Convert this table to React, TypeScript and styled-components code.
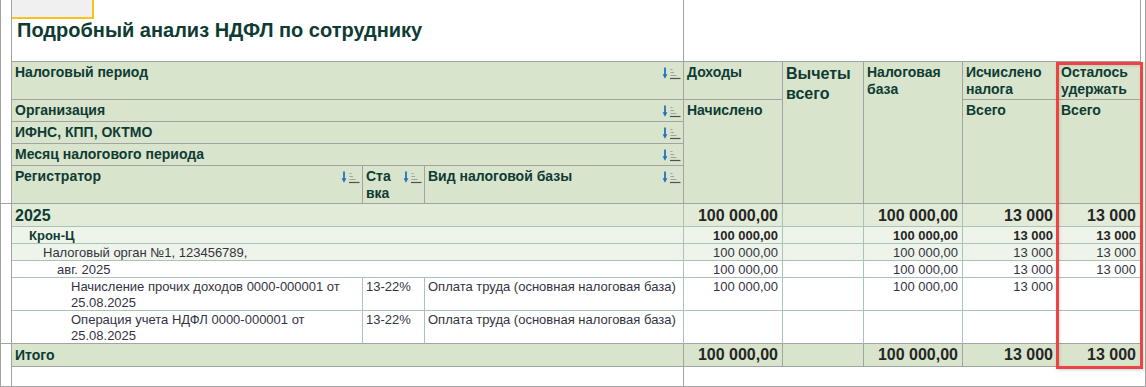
import React from 'react';
import styled, { createGlobalStyle, css } from 'styled-components';

const C = {
  headerBg: '#d9e4cc',
  yearBg: '#e2ebd8',
  lightBg: '#eef4e9',
  white: '#ffffff',
  gridLine: '#a3a3a3',
  dataLine: '#a9c3b9',
  ink: '#0e3b33',
  text: '#33333f',
  num: '#262626',
  red: '#ec4343',
};

type Kind = 'year' | 'org' | 'ifns' | 'month' | 'detail' | 'total';

interface KindStyle {
  bg: string;
  line: string;
  labelSize: number;
  labelWeight: number;
  labelColor: string;
  numSize: number;
  numWeight: number;
  numColor: string;
  lh: number;
  pt: number;
}

const KIND: Record<Kind, KindStyle> = {
  year: { bg: C.yearBg, line: C.dataLine, labelSize: 16, labelWeight: 700, labelColor: C.ink, numSize: 16, numWeight: 700, numColor: C.num, lh: 18, pt: 3 },
  org: { bg: C.lightBg, line: C.dataLine, labelSize: 13, labelWeight: 700, labelColor: C.ink, numSize: 13, numWeight: 700, numColor: C.num, lh: 16, pt: 1 },
  ifns: { bg: C.lightBg, line: C.dataLine, labelSize: 13, labelWeight: 400, labelColor: C.text, numSize: 13, numWeight: 400, numColor: C.text, lh: 16, pt: 1 },
  month: { bg: C.white, line: C.dataLine, labelSize: 13, labelWeight: 400, labelColor: C.text, numSize: 13, numWeight: 400, numColor: C.text, lh: 16, pt: 1 },
  detail: { bg: C.white, line: C.dataLine, labelSize: 13, labelWeight: 400, labelColor: C.text, numSize: 13, numWeight: 400, numColor: C.text, lh: 16, pt: 1 },
  total: { bg: C.headerBg, line: C.gridLine, labelSize: 14, labelWeight: 700, labelColor: C.ink, numSize: 16, numWeight: 700, numColor: C.num, lh: 18, pt: 2 },
};

interface DataRow {
  kind: Kind;
  level: number;
  label: string;
  detail?: { stavka: string; vid: string };
  values: [string, string, string, string, string];
}

const FULL: [string, string, string, string, string] = ['100 000,00', '', '100 000,00', '13 000', '13 000'];

const ROWS: DataRow[] = [
  { kind: 'year', level: 0, label: '2025', values: FULL },
  { kind: 'org', level: 1, label: 'Крон-Ц', values: FULL },
  { kind: 'ifns', level: 2, label: 'Налоговый орган №1, 123456789,', values: FULL },
  { kind: 'month', level: 3, label: 'авг. 2025', values: FULL },
  {
    kind: 'detail',
    level: 4,
    label: 'Начисление прочих доходов 0000-000001 от 25.08.2025',
    detail: { stavka: '13-22%', vid: 'Оплата труда (основная налоговая база)' },
    values: ['100 000,00', '', '100 000,00', '13 000', ''],
  },
  {
    kind: 'detail',
    level: 4,
    label: 'Операция учета НДФЛ 0000-000001 от 25.08.2025',
    detail: { stavka: '13-22%', vid: 'Оплата труда (основная налоговая база)' },
    values: ['', '', '', '', ''],
  },
  { kind: 'total', level: 0, label: 'Итого', values: FULL },
];

const GlobalStyle = createGlobalStyle`
  *, *::before, *::after { box-sizing: border-box; }
  html, body { margin: 0; padding: 0; background: #fff; }
  body { font-family: "Liberation Sans", Arial, sans-serif; }
`;

const Frame = styled.div`
  position: relative;
  width: 1146px;
  height: 387px;
  border-left: 1px solid ${C.gridLine};
  border-right: 1px solid ${C.gridLine};
  border-bottom: 1px solid ${C.gridLine};
  background: #fff;
  overflow: hidden;
`;

const Sheet = styled.div`
  display: grid;
  grid-template-columns: 11px 351px 62px 259px 99px 81px 99px 95px 83px;
  grid-template-rows: 62px 38px 22px 22px 22px 38px 23px 17px 17px 17px 33px 33px 23px 19px;
  color: ${C.ink};
`;

const GutterCell = styled.div<{ $row: string; $bottom?: boolean }>`
  grid-column: 1;
  grid-row: ${(p) => p.$row};
  background: #fff;
  border-right: 1px solid ${C.gridLine};
  border-bottom: ${(p) => (p.$bottom ? `1px solid ${C.gridLine}` : 'none')};
`;

const TitleCell = styled.div`
  grid-column: 2 / 5;
  grid-row: 1;
  display: flex;
  flex-direction: column;
  align-items: flex-start;
  border-right: 1px solid ${C.gridLine};
  border-bottom: 1px solid ${C.gridLine};
`;

const SelectedMark = styled.div`
  box-sizing: content-box;
  width: 80px;
  height: 17px;
  background: #f0f0f0;
  border-right: 2px solid #f7c21c;
  border-bottom: 2px solid #f7c21c;
`;

const Title = styled.h1`
  margin: 0;
  padding-left: 5px;
  font-size: 20px;
  line-height: 23px;
  font-weight: 700;
  color: ${C.ink};
  white-space: nowrap;
`;

const TopBlank = styled.div`
  grid-column: 5 / 10;
  grid-row: 1;
  border-right: 1px solid ${C.gridLine};
  border-bottom: 1px solid ${C.gridLine};
`;

const HeaderCell = styled.div<{ $col: string; $row: string; $big?: boolean }>`
  grid-column: ${(p) => p.$col};
  grid-row: ${(p) => p.$row};
  display: flex;
  justify-content: space-between;
  align-items: flex-start;
  gap: 2px;
  padding: 2px 1px 0 3px;
  background: ${C.headerBg};
  border-right: 1px solid ${C.gridLine};
  border-bottom: 1px solid ${C.gridLine};
  font-weight: 700;
  font-size: ${(p) => (p.$big ? 16 : 14)}px;
  line-height: ${(p) => (p.$big ? 20 : 17)}px;
  color: ${C.ink};
  overflow: hidden;
`;

const HeaderLabel = styled.span`
  min-width: 0;
`;

const SortSvg = styled.svg`
  flex: none;
  margin-top: 3px;
`;

const SortIcon = () => (
  <SortSvg width="20" height="13" viewBox="0 0 20 13">
    <path d="M3 0.5V8" stroke="#2372c2" strokeWidth="1.8" />
    <path d="M0.6 7.2H5.4L3 11.8Z" fill="#2372c2" />
    <path d="M8.5 2.5H10.5M8.5 5.5H12M8.5 8.5H14.5" stroke="#a2a2a2" strokeWidth="1" />
    <path d="M8 11.5H18.5" stroke="#505050" strokeWidth="1.2" />
  </SortSvg>
);

const dataBase = css<{ $kind: Kind; $closing?: boolean }>`
  background: ${(p) => KIND[p.$kind].bg};
  border-right: 1px solid ${(p) => KIND[p.$kind].line};
  border-bottom: 1px solid ${(p) => (p.$closing ? C.gridLine : KIND[p.$kind].line)};
  padding-top: ${(p) => KIND[p.$kind].pt}px;
  line-height: ${(p) => KIND[p.$kind].lh}px;
  overflow: hidden;
`;

const LabelCell = styled.div<{ $kind: Kind; $closing?: boolean; $col: string; $row: number; $level: number }>`
  ${dataBase}
  grid-column: ${(p) => p.$col};
  grid-row: ${(p) => p.$row};
  padding-left: ${(p) => 3 + p.$level * 14}px;
  padding-right: 2px;
  font-size: ${(p) => KIND[p.$kind].labelSize}px;
  font-weight: ${(p) => KIND[p.$kind].labelWeight};
  color: ${(p) => KIND[p.$kind].labelColor};
`;

const NumberCell = styled.div<{ $kind: Kind; $closing?: boolean; $col: number; $row: number }>`
  ${dataBase}
  grid-column: ${(p) => p.$col};
  grid-row: ${(p) => p.$row};
  padding-right: 4px;
  text-align: right;
  white-space: nowrap;
  font-size: ${(p) => KIND[p.$kind].numSize}px;
  font-weight: ${(p) => KIND[p.$kind].numWeight};
  color: ${(p) => KIND[p.$kind].numColor};
`;

const BottomBlank = styled.div<{ $col: string; $edge?: boolean }>`
  grid-column: ${(p) => p.$col};
  grid-row: 14;
  background: #fff;
  border-right: ${(p) => (p.$edge ? `1px solid ${C.gridLine}` : 'none')};
`;

const Highlight = styled.div`
  position: absolute;
  left: 1055px;
  top: 62px;
  width: 87px;
  height: 307px;
  border: 3px solid ${C.red};
  box-shadow: 1px 1px 3px rgba(0, 0, 0, 0.18), inset 1px 1px 3px rgba(0, 0, 0, 0.12);
  pointer-events: none;
`;

const Header = () => (
  <>
    <HeaderCell $col="2 / 5" $row="2">
      <HeaderLabel>Налоговый период</HeaderLabel>
      <SortIcon />
    </HeaderCell>
    <HeaderCell $col="2 / 5" $row="3">
      <HeaderLabel>Организация</HeaderLabel>
      <SortIcon />
    </HeaderCell>
    <HeaderCell $col="2 / 5" $row="4">
      <HeaderLabel>ИФНС, КПП, ОКТМО</HeaderLabel>
      <SortIcon />
    </HeaderCell>
    <HeaderCell $col="2 / 5" $row="5">
      <HeaderLabel>Месяц налогового периода</HeaderLabel>
      <SortIcon />
    </HeaderCell>
    <HeaderCell $col="2" $row="6">
      <HeaderLabel>Регистратор</HeaderLabel>
      <SortIcon />
    </HeaderCell>
    <HeaderCell $col="3" $row="6">
      <HeaderLabel>
        Ста
        <br />
        вка
      </HeaderLabel>
      <SortIcon />
    </HeaderCell>
    <HeaderCell $col="4" $row="6">
      <HeaderLabel>Вид налоговой базы</HeaderLabel>
      <SortIcon />
    </HeaderCell>
    <HeaderCell $col="5" $row="2">
      <HeaderLabel>Доходы</HeaderLabel>
    </HeaderCell>
    <HeaderCell $col="5" $row="3 / 7">
      <HeaderLabel>Начислено</HeaderLabel>
    </HeaderCell>
    <HeaderCell $col="6" $row="2 / 7" $big>
      <HeaderLabel>Вычеты всего</HeaderLabel>
    </HeaderCell>
    <HeaderCell $col="7" $row="2 / 7">
      <HeaderLabel>Налоговая база</HeaderLabel>
    </HeaderCell>
    <HeaderCell $col="8" $row="2">
      <HeaderLabel>Исчислено налога</HeaderLabel>
    </HeaderCell>
    <HeaderCell $col="8" $row="3 / 7">
      <HeaderLabel>Всего</HeaderLabel>
    </HeaderCell>
    <HeaderCell $col="9" $row="2">
      <HeaderLabel>Осталось удержать</HeaderLabel>
    </HeaderCell>
    <HeaderCell $col="9" $row="3 / 7">
      <HeaderLabel>Всего</HeaderLabel>
    </HeaderCell>
  </>
);

const Row = ({ row, index, closing }: { row: DataRow; index: number; closing: boolean }) => {
  const r = 7 + index;
  return (
    <>
      {row.detail ? (
        <>
          <LabelCell $kind={row.kind} $closing={closing} $col="2" $row={r} $level={row.level}>
            {row.label}
          </LabelCell>
          <LabelCell $kind={row.kind} $closing={closing} $col="3" $row={r} $level={0}>
            {row.detail.stavka}
          </LabelCell>
          <LabelCell $kind={row.kind} $closing={closing} $col="4" $row={r} $level={0}>
            {row.detail.vid}
          </LabelCell>
        </>
      ) : (
        <LabelCell $kind={row.kind} $closing={closing} $col="2 / 5" $row={r} $level={row.level}>
          {row.label}
        </LabelCell>
      )}
      {row.values.map((v, i) => (
        <NumberCell key={i} $kind={row.kind} $closing={closing} $col={5 + i} $row={r}>
          {v}
        </NumberCell>
      ))}
    </>
  );
};

export default function App() {
  return (
    <>
      <GlobalStyle />
      <Frame>
        <Sheet>
          <GutterCell $row="1 / 7" $bottom />
          <GutterCell $row="7 / 13" $bottom />
          <GutterCell $row="13 / 15" />
          <TitleCell>
            <SelectedMark />
            <Title>Подробный анализ НДФЛ по сотруднику</Title>
          </TitleCell>
          <TopBlank />
          <Header />
          {ROWS.map((row, i) => (
            <Row key={i} row={row} index={i} closing={ROWS[i + 1]?.kind === 'total'} />
          ))}
          <BottomBlank $col="2 / 5" $edge />
          <BottomBlank $col="5 / 10" />
        </Sheet>
        <Highlight />
      </Frame>
    </>
  );
}
